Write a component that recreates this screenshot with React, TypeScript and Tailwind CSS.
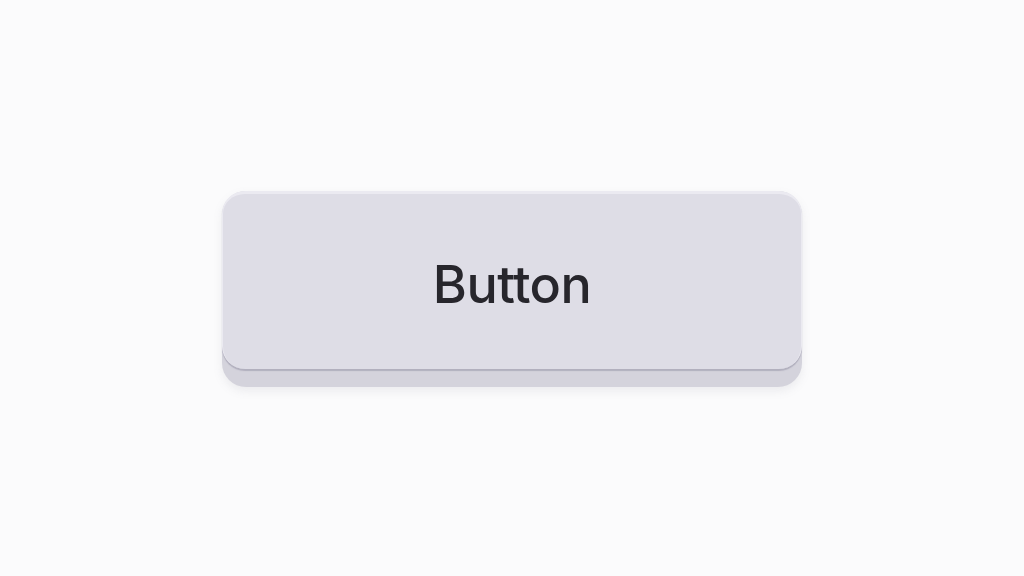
export default function App() {
  return (
    <div className="w-full h-screen bg-[#fbfbfc] flex items-center justify-center" style={{ fontFamily: 'Inter, "Noto Sans", sans-serif' }}>
      <div className="w-[580px] rounded-[24px] bg-[#d4d3dc] pb-[18px] mt-[2px] shadow-[0_4px_10px_rgba(120,120,140,0.12)]">
        <button className="w-full h-[178px] rounded-[23px] bg-[#dedde6] border-t-[3px] border-x border-[#ebeaf1] shadow-[0_2px_1px_rgba(150,148,165,0.55)] flex items-center justify-center">
          <span className="text-[52px] font-medium text-[#27262c] tracking-[-0.01em] leading-none pt-[6px]">Button</span>
        </button>
      </div>
    </div>
  );
}
